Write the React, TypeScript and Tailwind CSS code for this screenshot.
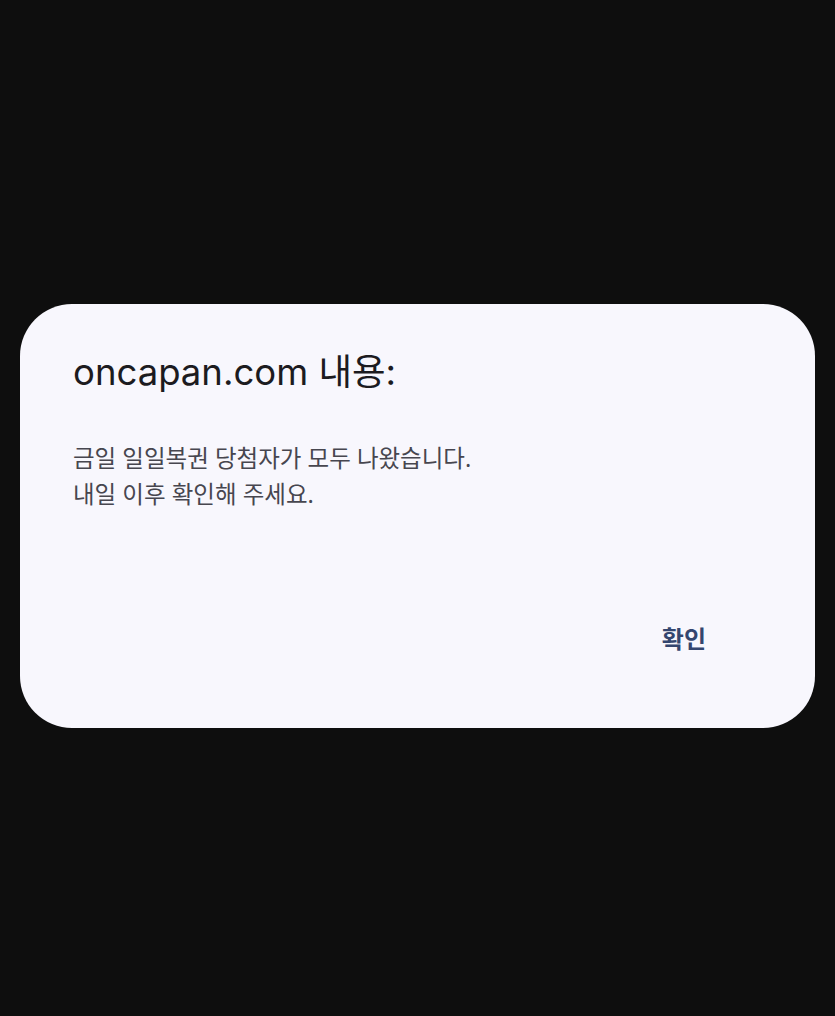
import React from 'react';

const font = { fontFamily: '"Noto Sans", "Noto Sans CJK KR", sans-serif' };
const titleFont = { fontFamily: 'Inter, "Noto Sans CJK KR", sans-serif' };

export default function App() {
    return (
        <div className="min-h-[1016px] w-full bg-[#0e0e0e] pt-[304px] px-[20px]" style={font}>
            <div className="flex h-[424px] flex-col rounded-[52px] bg-[#f8f7fd] pl-[53px] pr-[109px] pt-[44px]">
                {/* Title */}
                <h1 className="text-[36.5px] leading-[48px] text-[#1c1b1f]" style={titleFont}>
                    oncapan.com 내용:
                </h1>

                {/* Message */}
                <p className="mt-[44px] text-[23.5px] leading-[36px] text-[#47464f]">
                    금일 일일복권 당첨자가 모두 나왔습니다.
                    <br />
                    내일 이후 확인해 주세요.
                </p>

                {/* Actions */}
                <div className="mt-auto mb-[73px] flex justify-end">
                    <button className="text-[24px] font-bold leading-[32px] text-[#34466f]">확인</button>
                </div>
            </div>
        </div>
    );
}
